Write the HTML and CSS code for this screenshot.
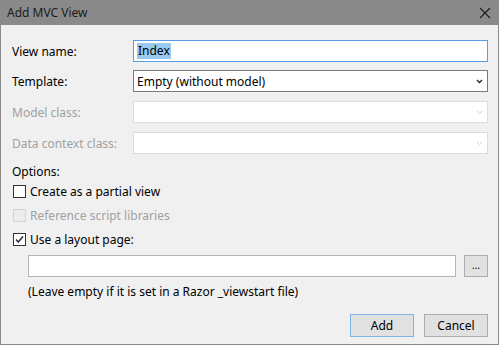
FILE: index.html
```html
<!DOCTYPE html>
<html lang="en">
<head>
  <meta charset="UTF-8">
  <title>Add MVC View</title>
  <link rel="stylesheet" href="styles.css">
</head>
<body>
  <div class="window">
    <div class="titlebar">
      <span class="title">Add MVC View</span>
      <svg class="close" width="12" height="12" viewBox="0 0 12 12">
        <path d="M1 1 L11 11 M11 1 L1 11" stroke="#1a1a1a" stroke-width="1.1" fill="none"/>
      </svg>
    </div>

    <div class="content">
      <div class="row r1">
        <label class="lbl">View name:</label>
        <div class="field focused"><span class="sel">Index</span></div>
      </div>

      <div class="row r2">
        <label class="lbl">Template:</label>
        <div class="field combo">
          <span>Empty (without model)</span>
          <svg class="arrow" width="7" height="5" viewBox="0 0 7 5"><path d="M1 1 L3.5 3.5 L6 1" stroke="#222" stroke-width="1.3" fill="none"/></svg>
        </div>
      </div>

      <div class="row r3">
        <label class="lbl off">Model class:</label>
        <div class="field combo disabled">
          <svg class="arrow" width="7" height="5" viewBox="0 0 7 5"><path d="M1 1 L3.5 3.5 L6 1" stroke="#cfcfcf" stroke-width="1" fill="none"/></svg>
        </div>
      </div>

      <div class="row r4">
        <label class="lbl off">Data context class:</label>
        <div class="field combo disabled">
          <svg class="arrow" width="7" height="5" viewBox="0 0 7 5"><path d="M1 1 L3.5 3.5 L6 1" stroke="#cfcfcf" stroke-width="1" fill="none"/></svg>
        </div>
      </div>

      <div class="options">Options:</div>

      <div class="check">
        <span class="box"></span>
        <span>Create as a partial view</span>
      </div>
      <div class="check off">
        <span class="box"></span>
        <span>Reference script libraries</span>
      </div>
      <div class="check">
        <span class="box">
          <svg width="11" height="11" viewBox="0 0 11 11"><path d="M2 5.5 L4.3 8 L9 2.5" stroke="#222" stroke-width="1.4" fill="none"/></svg>
        </span>
        <span>Use a layout page:</span>
      </div>

      <div class="layout">
        <div class="field path"></div>
        <div class="btn browse">...</div>
      </div>
      <div class="note">(Leave empty if it is set in a Razor _viewstart file)</div>

      <div class="actions">
        <div class="btn default">Add</div>
        <div class="btn">Cancel</div>
      </div>
    </div>
  </div>
</body>
</html>
```

FILE: styles.css
```css
* { box-sizing: border-box; }
body { margin: 0; background: #fff; font-family: "Noto Sans", sans-serif; font-size: 12px; color: #000; }

.window { width: 499px; height: 345px; background: #f0f0f0; border: 1px solid #8a8a8a; border-top: none; display: flex; flex-direction: column; }
.titlebar { height: 25px; background: #8a8a8a; display: flex; align-items: center; justify-content: space-between; padding: 0 8px 0 7px; margin: 0 -1px; }
.title { color: #1a1a1a; font-size: 12px; }
.close { margin-top: 1px; }

.content { padding: 15px 10px 0 11px; display: flex; flex-direction: column; }
.row { display: flex; align-items: center; height: 22px; }
.r2 { margin-top: 8px; }
.r3 { margin-top: 9px; }
.r4 { margin-top: 9px; }
.lbl { width: 121px; flex-shrink: 0; }
.off { color: #a0a0a0; }

.field { flex: 1; height: 22px; background: #fff; border: 1px solid #7a7a7a; display: flex; align-items: center; padding: 0 3px; }
.focused { border-color: #569de5; }
.sel { background: #99c9ef; padding: 0 1px; line-height: 16px; }
.combo { justify-content: space-between; padding-right: 4px; }
.disabled { border-color: #dcdcdc; justify-content: flex-end; }

.options { margin-top: 10px; line-height: 16px; }
.check { display: flex; align-items: center; height: 23px; gap: 4px; }
.check + .check { height: 24px; }
.box { width: 13px; height: 13px; border: 1px solid #333; background: #fff; display: flex; align-items: center; justify-content: center; margin-left: 1px; }
.check.off .box { border-color: #d4d4d4; background: #ececec; }

.layout { display: flex; margin: 4px 0 0 16px; gap: 8px; }
.path { border-color: #b4b4b4; }
.btn { height: 22px; background: #e1e1e1; border: 1px solid #adadad; display: flex; align-items: center; justify-content: center; }
.browse { width: 24px; height: 22px; font-size: 10px; padding-bottom: 3px; }
.note { margin: 7px 0 0 16px; line-height: 16px; }

.actions { display: flex; justify-content: flex-end; gap: 10px; margin-top: 14px; }
.actions .btn { width: 64px; height: 23px; }
.default { border-color: #7eb4ea; }
```
